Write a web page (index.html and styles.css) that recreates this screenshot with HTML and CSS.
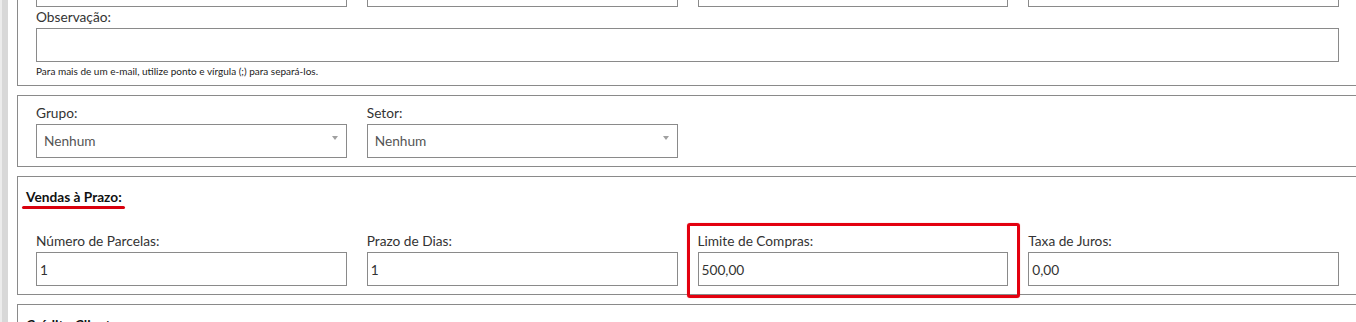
FILE: index.html
```html
<!DOCTYPE html>
<html lang="pt-BR">
<head>
  <meta charset="UTF-8">
  <title>Cadastro de Cliente</title>
  <meta name="viewport" content="width=device-width, initial-scale=1.0">
  <link rel="stylesheet" href="styles.css">
</head>
<body>
  <div class="page">
    <aside class="side-strip"></aside>

    <main class="content">

      <!-- Contatos (topo cortado pela rolagem) -->
      <section class="panel panel-first">
        <div class="row grid-4 row-tight">
          <div class="field"><input type="text" value=""></div>
          <div class="field"><input type="text" value=""></div>
          <div class="field"><input type="text" value=""></div>
          <div class="field"><input type="text" value=""></div>
        </div>
        <div class="row">
          <label>Observação:</label>
          <textarea></textarea>
          <p class="help">Para mais de um e-mail, utilize ponto e vírgula (;) para separá-los.</p>
        </div>
      </section>

      <!-- Grupo / Setor -->
      <section class="panel">
        <div class="row grid-4">
          <div class="field">
            <label>Grupo:</label>
            <div class="select">Nenhum</div>
          </div>
          <div class="field">
            <label>Setor:</label>
            <div class="select">Nenhum</div>
          </div>
        </div>
      </section>

      <!-- Vendas a prazo -->
      <section class="panel">
        <h3 class="panel-title"><span class="marked">Vendas à Prazo:</span></h3>
        <div class="row grid-4">
          <div class="field">
            <label>Número de Parcelas:</label>
            <input type="text" value="1">
          </div>
          <div class="field">
            <label>Prazo de Dias:</label>
            <input type="text" value="1">
          </div>
          <div class="field highlight">
            <label>Limite de Compras:</label>
            <input type="text" value="500,00">
          </div>
          <div class="field">
            <label>Taxa de Juros:</label>
            <input type="text" value="0,00">
          </div>
        </div>
      </section>

      <section class="panel">
        <h3 class="panel-title">Crédito Cliente:</h3>
      </section>

    </main>
  </div>
</body>
</html>
```

FILE: styles.css
```css
:root {
  --line: #8a8a8a;
  --text: #333;
  --mark: #d9000d;
}

body {
  margin: 0;
  font-family: Lato, 'Noto Sans', sans-serif;
  font-size: 13.7px;
  color: var(--text);
  background: #fff;
  overflow: hidden;
}

.page {
  display: flex;
  align-items: flex-start;
}

.side-strip {
  flex: 0 0 6px;
  align-self: stretch;
  min-height: 322px;
  background: #d8d8d8;
  border-left: 2px solid #ececec;
}

.content {
  flex: 0 0 1341px;
  margin-left: 9px;
}

.panel {
  border: 1px solid var(--line);
  padding: 9px 8px 8px;
  margin-bottom: 9px;
  background: #fff;
}

.panel-first {
  margin-top: -37px;
}

.row {
  padding: 0 10px;
}

.row-tight {
  margin-bottom: 2px;
}

.grid-4 {
  display: grid;
  grid-template-columns: repeat(4, 1fr);
  column-gap: 20px;
}

label {
  display: block;
  line-height: 16px;
  margin-bottom: 3px;
  color: var(--text);
}

input, textarea, .select {
  display: block;
  width: 100%;
  box-sizing: border-box;
  height: 34px;
  margin: 0;
  border: 1px solid var(--line);
  border-radius: 0;
  font-family: inherit;
  font-size: 13.7px;
  color: var(--text);
  background: #fff;
}

input {
  padding: 0 3px;
}

textarea {
  resize: none;
  padding: 3px;
}

.select {
  position: relative;
  padding: 0 7px;
  line-height: 32px;
  color: #555;
}

.select::after {
  content: "";
  position: absolute;
  right: 8px;
  top: 11px;
  border-left: 3px solid transparent;
  border-right: 3px solid transparent;
  border-top: 4px solid #a0a0a0;
}

.help {
  margin: 3px 0 0;
  font-size: 10px;
  line-height: 12px;
  color: #222;
}

.panel-title {
  margin: 2px 0 27px;
  font-size: 13.7px;
  line-height: 18px;
  font-weight: bold;
  color: #111;
}

/* red annotation marks */
.marked {
  position: relative;
  display: inline-block;
}

.marked::after {
  content: "";
  position: absolute;
  left: -4px;
  right: -3px;
  bottom: -3px;
  height: 3px;
  border-radius: 2px;
  background: var(--mark);
}

.highlight {
  position: relative;
}

.highlight::after {
  content: "";
  position: absolute;
  top: -10px;
  left: -11px;
  right: -12px;
  bottom: -12px;
  border: 3px solid #e3000f;
  border-radius: 3px;
  box-shadow: 0 0 1px rgba(227, 0, 15, 0.5);
  pointer-events: none;
}
```
